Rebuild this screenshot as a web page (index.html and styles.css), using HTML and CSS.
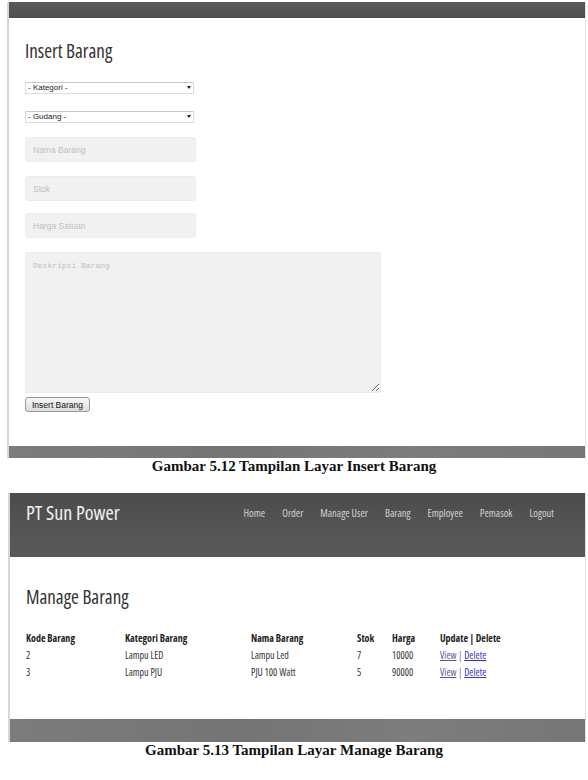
FILE: index.html
```html
<!DOCTYPE html>
<html lang="id">
<head>
  <meta charset="UTF-8" />
  <meta name="viewport" content="width=device-width, initial-scale=1.0" />
  <title>Tampilan Layar Barang</title>
  <link rel="stylesheet" href="styles.css">
</head>
<body>

  <!-- layar insert barang -->
  <div class="shot shot-insert">
    <div class="topbar"></div>
    <div class="insert-body">
      <h2 class="page-title">Insert Barang</h2>

      <div class="pick pick-first">
        <select><option>- Kategori -</option></select>
        <span class="caret"></span>
      </div>
      <div class="pick">
        <select><option>- Gudang -</option></select>
        <span class="caret"></span>
      </div>

      <input class="box box-first" placeholder="Nama Barang">
      <input class="box" placeholder="Stok">
      <input class="box box-tight" placeholder="Harga Satuan">
      <textarea class="desc" placeholder="Deskripsi Barang"></textarea>

      <button class="btn">Insert Barang</button>
    </div>
    <div class="footbar footbar-thin"></div>
  </div>
  <p class="caption">Gambar 5.12 Tampilan Layar Insert Barang</p>

  <!-- layar manage barang -->
  <div class="shot shot-manage">
    <header class="header">
      <span class="brand">PT Sun Power</span>
      <nav class="nav">
        <a>Home</a>
        <a>Order</a>
        <a>Manage User</a>
        <a>Barang</a>
        <a>Employee</a>
        <a>Pemasok</a>
        <a>Logout</a>
      </nav>
    </header>
    <div class="manage-body">
      <h2 class="manage-title">Manage Barang</h2>
      <table class="items">
        <colgroup>
          <col style="width:99px"><col style="width:126px"><col style="width:106px">
          <col style="width:35px"><col style="width:48px"><col>
        </colgroup>
        <tr><th>Kode Barang</th><th>Kategori Barang</th><th>Nama Barang</th><th>Stok</th><th>Harga</th><th>Update | Delete</th></tr>
        <tr><td>2</td><td>Lampu LED</td><td>Lampu Led</td><td>7</td><td>10000</td><td><a class="seen" href="#">View</a> <span class="sep">|</span> <a class="del" href="#">Delete</a></td></tr>
        <tr><td>3</td><td>Lampu PJU</td><td>PJU 100 Watt</td><td>5</td><td>90000</td><td><a class="seen" href="#">View</a> <span class="sep">|</span> <a class="del" href="#">Delete</a></td></tr>
      </table>
    </div>
    <div class="footbar footbar-wide"></div>
  </div>
  <p class="caption">Gambar 5.13 Tampilan Layar Manage Barang</p>

</body>
</html>
```

FILE: styles.css
```css
body    { margin: 0; background: #fff; color: #222;
          font-family: "Liberation Sans", Arial, sans-serif; }

/* each screen capture sits in a thin grey frame */
.shot   { width: 579px; margin-left: 7px; box-sizing: border-box;
          border-left: 2px solid #d6d6d6; border-right: 1px solid #e2e2e2; }
.shot-insert { margin-top: 2px; }
.shot-manage { margin-top: 18px; width: 578px; margin-left: 8px; }

.topbar { height: 16px; background: linear-gradient(#595959, #4f4f4f); }
.footbar { background: linear-gradient(90deg, #7c7c7c, #747474 40%, #7d7d7d 70%, #767676); }
.footbar-thin { height: 12px; }
.footbar-wide { height: 23px; }

.caption { margin: 0; text-align: center; color: #111;
           font: bold 15px/17px "Liberation Serif", "Times New Roman", serif; }

/* insert form */
.insert-body { height: 428px; box-sizing: border-box; padding: 22px 0 0 16px;
               display: flex; flex-direction: column; align-items: flex-start; }

.page-title { margin: 0; font: 400 19px/22px "Open Sans", sans-serif;
              font-stretch: 75%; color: #333; }

.pick   { position: relative; width: 169px; height: 12px; margin-top: 17px; }
.pick-first { margin-top: 20px; }
.pick select {
  appearance: none; -webkit-appearance: none; display: block;
  width: 100%; height: 12px; margin: 0; padding: 0 0 0 2px;
  border: 1px solid #dcdcdc; border-top-color: #cbcbcb; border-radius: 1px;
  background: #fff; color: #222; font: 8px/10px "Liberation Sans", Arial, sans-serif;
}
.caret  { position: absolute; right: 3px; top: 4px; width: 0; height: 0;
          border-left: 2.5px solid transparent; border-right: 2.5px solid transparent;
          border-top: 3px solid #222; }

.box    { width: 171px; height: 25px; margin: 12px 0 0; padding: 0 7px;
          box-sizing: border-box; border: 1px solid #ececec; border-radius: 3px;
          background: #f1f1f1; font: 8.5px "Liberation Sans", Arial, sans-serif; }
.box-first { margin-top: 14px; }
.box + .box { margin-top: 14px; }
.box-tight { margin-top: 12px !important; }
.box::placeholder, .desc::placeholder { color: #bfbfbf; }

.desc   { width: 356px; height: 141px; margin: 14px 0 0; padding: 8px 7px;
          box-sizing: border-box; border: 1px solid #ececec; border-radius: 2px;
          background: #f1f1f1; font: 8px/10px "Liberation Mono", "Courier New", monospace; }

.btn    { margin-top: 4px; height: 15px; padding: 0 6px; box-sizing: border-box;
          border: 1px solid #9a9a9a; border-radius: 3px;
          background: linear-gradient(#f7f7f7, #dcdcdc); color: #111;
          font: 8.5px/12px "Liberation Sans", Arial, sans-serif; }

/* manage page */
.header { height: 64px; box-sizing: border-box; padding: 6px 31px 0 16px;
          display: flex; align-items: flex-start;
          background: linear-gradient(#4c4c4c, #555 60%, #585858); }
.brand  { font: 400 20px/28px "Open Sans", sans-serif; font-stretch: 75%; color: #f2f2f2; }
.nav    { margin-left: auto; display: flex; gap: 17px;
          font: 400 10.5px/28px "Open Sans", sans-serif; font-stretch: 75%; }
.nav a  { color: #d2d2d2; }

.manage-body { height: 162px; box-sizing: border-box; padding: 29px 0 0 16px; }
.manage-title { margin: 0; font: 400 19px/22px "Open Sans", sans-serif;
                font-stretch: 75%; color: #333; }

.items  { margin-top: 22px; border-collapse: collapse; table-layout: fixed; width: 520px;
          font: 400 10px/17px "Open Sans", sans-serif; font-stretch: 75%; color: #333; }
.items th, .items td { padding: 0; text-align: left; white-space: nowrap; }
.items th { font-weight: 700; color: #222; }
.items a.seen { color: #6a4f98; }
.items a.del  { color: #3434c8; }
.sep    { color: #777; }
```
